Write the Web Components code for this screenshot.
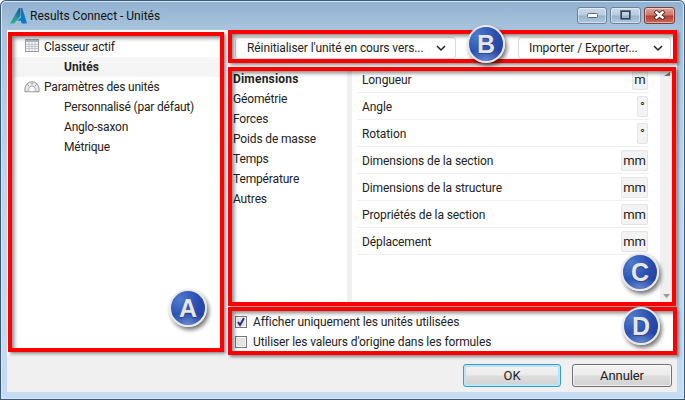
<!DOCTYPE html>
<html lang="fr"><head><meta charset="utf-8"><title>Results Connect - Unités</title>
<style>
html,body{margin:0;padding:0;background:#fff}
body{font:12px/16px Roboto,"Liberation Sans",sans-serif;color:#222;width:685px;height:400px;overflow:hidden;letter-spacing:-.1px}
</style></head><body>
<x-window title-text="Results Connect - Unités">
  <x-pane slot="a" style="height:320px;margin-top:2px">
    <x-tree-item icon="table">Classeur actif</x-tree-item>
    <x-tree-item indent selected>Unités</x-tree-item>
    <x-tree-item icon="protractor">Paramètres des unités</x-tree-item>
    <x-tree-item indent>Personnalisé (par défaut)</x-tree-item>
    <x-tree-item indent>Anglo-saxon</x-tree-item>
    <x-tree-item indent>Métrique</x-tree-item>
  </x-pane>
  <x-pane slot="b" variant="toolbar" style="height:33px;margin-bottom:4px">
    <x-combo style="width:221px;padding-right:9px">Réinitialiser l'unité en cours vers...</x-combo>
    <x-combo style="width:153px;padding-left:10px">Importer / Exporter...</x-combo>
  </x-pane>
  <x-pane slot="c" style="height:239px;margin-right:1px;margin-bottom:1px">
    <x-units>
      <x-nav-item slot="nav" selected>Dimensions</x-nav-item>
      <x-nav-item slot="nav">Géométrie</x-nav-item>
      <x-nav-item slot="nav">Forces</x-nav-item>
      <x-nav-item slot="nav">Poids de masse</x-nav-item>
      <x-nav-item slot="nav">Temps</x-nav-item>
      <x-nav-item slot="nav">Température</x-nav-item>
      <x-nav-item slot="nav">Autres</x-nav-item>
      <x-unit-row unit="m" w="16">Longueur</x-unit-row>
      <x-unit-row unit="°" w="11">Angle</x-unit-row>
      <x-unit-row unit="°" w="11">Rotation</x-unit-row>
      <x-unit-row unit="mm" w="27">Dimensions de la section</x-unit-row>
      <x-unit-row unit="mm" w="27">Dimensions de la structure</x-unit-row>
      <x-unit-row unit="mm" w="27">Propriétés de la section</x-unit-row>
      <x-unit-row unit="mm" w="27">Déplacement</x-unit-row>
    </x-units>
  </x-pane>
  <x-pane slot="d" variant="checks" style="height:48px">
    <x-check checked>Afficher uniquement les unités utilisées</x-check>
    <x-check>Utiliser les valeurs d'origine dans les formules</x-check>
  </x-pane>
  <x-btn slot="footer" primary style="width:98px">OK</x-btn>
  <x-btn slot="footer" style="width:100px">Annuler</x-btn>
  <x-badge slot="badges" style="left:169px;top:289px">A</x-badge>
  <x-badge slot="badges" style="left:467px;top:25px">B</x-badge>
  <x-badge slot="badges" style="left:621px;top:253px">C</x-badge>
  <x-badge slot="badges" style="left:622px;top:307px">D</x-badge>
</x-window>
<script>
function def(name, css, html){
  customElements.define(name, class extends HTMLElement{
    connectedCallback(){ if(this.shadowRoot) return; const s=this.attachShadow({mode:'open'});s.innerHTML='<style>'+css+'</style>'+(typeof html==='function'?html(this):html);}
  });
}
const ICONS={
 table:'<svg width="16" height="14" viewBox="0 0 16 14"><rect x="1.5" y=".5" width="13" height="12" fill="#f4f5f7" stroke="#9a9ea5"/><rect x="2" y="1" width="12" height="2" fill="#b5bac2"/><path d="M2 5.500h12M2 7.500h12M2 9.500h12M5 3v9M8 3v9M11 3v9" stroke="#c4c8ce" fill="none"/></svg>',
 protractor:'<svg width="17" height="13" viewBox="0 0 17 13"><path d="M1 12V9a7.500 7.500 0 0 1 15 0v3z" fill="#e9e9e9" stroke="#8f8f8f"/><path d="M5 12V9.500a3.500 3.500 0 0 1 7 0V12z" fill="#fff" stroke="#a5a5a5"/><path d="M8.500 2.500v2M4 4.500l1.200 1.400M13 4.500l-1.200 1.400" stroke="#8f8f8f"/></svg>'
};
def('x-window',`
 :host{display:flex;flex-direction:column;position:relative;width:685px;height:400px;box-sizing:border-box;border-radius:6px 6px 0 0;
   background:linear-gradient(180deg,#8fb0cf 0,#a9c4de 30px,#bcd5ee 160px,#c6dcf2 400px);
   box-shadow:inset 0 0 0 1px #3b5a74, inset 0 0 0 2px #d5e6f5;}
 .title{height:30px;flex:none;display:flex;align-items:center;padding:0 10px 0 10px;gap:3px;box-sizing:border-box}
 .title span{color:#111;flex:1;padding-top:1px;letter-spacing:0}
 .ctl{display:flex;gap:3px;margin-top:0}
 .ctl i{display:flex;align-items:center;justify-content:center;box-sizing:border-box;width:30px;height:17px;border:1px solid #6c8299;border-radius:3px;
   background:linear-gradient(180deg,#cddbe8 0,#b9cce0 48%,#98b2cc 52%,#b2c9de 100%);box-shadow:inset 0 0 0 1px rgba(255,255,255,.45)}
 .ctl i.close{width:31px;border-color:#7a3d3a;background:linear-gradient(180deg,#e0a59c 0,#cf7468 48%,#b23d30 52%,#c96b5e 100%)}
 .client{flex:1;margin:0 8px 8px 7px;background:#f0f0f0;display:flex;flex-direction:column;min-height:0}
 .main{height:325px;flex:none;display:grid;grid-template-columns:216px 1fr;column-gap:4px;padding:0 0 0 1px;background:#fff}
 .right{display:flex;flex-direction:column;min-width:0}
 .foot{display:flex;justify-content:flex-end;gap:11px;padding:9px 5px 0 0}
`,(h)=>`
 <div class="title">
  <svg width="17" height="17" viewBox="0 0 17 17"><defs><linearGradient id="g" x1="0" y1="1" x2=".6" y2="0"><stop offset="0" stop-color="#3cb46e"/><stop offset=".5" stop-color="#1f9aa0"/><stop offset="1" stop-color="#1a5f8e"/></linearGradient></defs>
   <path d="M0 16.500 9 1h1.500v8L4 16.500z" fill="url(#g)"/><path d="M11 1h1.300L17 16.500h-5.300l-.7-2.700H7l4-3.300z" fill="#0a7cc4"/></svg>
  <span>${h.getAttribute('title-text')}</span>
  <div class="ctl">
   <i><svg width="11" height="6"><rect x=".5" y="1.500" width="10" height="4" rx="1" fill="#fff" stroke="#54677c"/></svg></i>
   <i style="width:31px"><svg width="11" height="10"><rect x="1" y="1" width="9" height="8" fill="none" stroke="#2e4358" stroke-width="2"/><rect x="0" y="0" width="11" height="10" fill="none" stroke="#fff" stroke-opacity=".5"/></svg></i>
   <i class="close"><svg width="13" height="10"><path d="M2 1l9 8M11 1L2 9" stroke="#3a1714" stroke-width="4"/><path d="M2.500 1.500l8 7M10.500 1.500l-8 7" stroke="#fff" stroke-width="2.400"/></svg></i>
  </div>
 </div>
 <div class="client">
  <div class="main"><div><slot name="a"></slot></div><div class="right"><slot name="b"></slot><slot name="c"></slot><slot name="d"></slot></div></div>
  <div class="foot"><slot name="footer"></slot></div>
 </div>
 <slot name="badges"></slot>`);
def('x-pane',`
 :host{display:block;box-sizing:border-box;border:4px solid #f00;background:#fff;position:relative;box-shadow:2px 2px 3px rgba(0,0,0,.45)}
 .in{position:absolute;inset:0;overflow:hidden}
 .sh{position:absolute;inset:0;box-shadow:inset 3px 3px 4px -1px rgba(0,0,0,.5);pointer-events:none;z-index:2}
 .c{height:100%;box-sizing:border-box}
 :host([variant=toolbar]) .c{display:flex;justify-content:space-between;padding:3px 2px 0 3px}
 :host([variant=checks]) .c{padding:1px 0 0 3px}
 :host(:not([variant])) .c{padding:1px 0 0 1px}
 :host([slot=c]) .c{padding:0}
`,`<div class="in"><div class="c"><slot></slot></div><div class="sh"></div></div>`);
def('x-tree-item',`
 :host{display:flex;align-items:center;height:20px;padding-left:11px;gap:4px;box-sizing:border-box;letter-spacing:-.2px}
 :host([indent]){padding-left:51px}
 :host([selected]){background:#f5f5f5;font-weight:700;letter-spacing:.1px}
 .ic{width:16px;height:14px;display:flex;align-items:center;margin-top:-2px}
`,(h)=>(h.getAttribute('icon')?`<span class="ic">${ICONS[h.getAttribute('icon')]}</span>`:'')+'<slot></slot>');
def('x-combo',`
 :host{display:flex;align-items:center;box-sizing:border-box;height:22px;border:1px solid #d9d9d9;border-radius:3px;background:#fff;padding:0 7px 0 11px;justify-content:space-between;white-space:nowrap}
`,`<slot></slot><svg width="10" height="7" viewBox="0 0 10 7"><path d="M1 1l4 4 4-4" fill="none" stroke="#222" stroke-width="1.500"/></svg>`);
def('x-units',`
 :host{display:flex;height:100%}
 nav{width:115px;flex:none;margin-top:-2px;padding-left:1px;box-sizing:border-box}
 .sep{width:5px;flex:none;background:#f0f0f0;height:231px}
 main{flex:1;margin-top:-5px;padding-left:5px;padding-right:11px;min-width:0}
 .bar{width:12px;flex:none;background:#f0f0f0;display:flex;flex-direction:column;justify-content:space-between;align-items:flex-end;padding:1px 2px 4px 0;box-sizing:border-box;height:231px}
 .wrap{flex:1;display:flex;overflow:hidden;height:231px;min-width:0}
`,`<nav><slot name="nav"></slot></nav><div class="sep"></div><div class="wrap"><main><slot></slot></main></div>
 <div class="bar"><svg width="6" height="4"><path d="M0 4h6V0z" fill="#777"/></svg><svg width="7" height="4"><path d="M0 0h7L3.500 4z" fill="#999"/></svg></div>`);
def('x-nav-item',`
 :host{display:flex;align-items:center;height:20px;letter-spacing:-.15px}
 :host([selected]){font-weight:700;letter-spacing:.2px}
`,'<slot></slot>');
def('x-unit-row',`
 :host{display:flex;align-items:center;height:27px;box-sizing:border-box;border-bottom:1px solid #efefef;padding:1px 1px 0 5px;justify-content:space-between}
 b{font-weight:400;display:flex;justify-content:center;align-items:center;box-sizing:border-box;height:21px;background:#f3f3f3;border:1px solid #e4e4e4;border-radius:2px;font-size:13px}
`,(h)=>`<slot></slot><b style="width:${h.getAttribute('w')}px">${h.getAttribute('unit')}</b>`);
def('x-check',`
 :host{display:flex;align-items:center;height:20px;gap:6px;white-space:nowrap}
 i{width:12px;height:12px;box-sizing:border-box;border:1px solid #777;background:#e4e4e4;box-shadow:inset 0 0 0 1px #f8f8f8;display:flex;align-items:center;justify-content:center}
`,(h)=>`<i>${h.hasAttribute('checked')?'<svg width="10" height="10" viewBox="0 0 10 10"><path d="M2 5l2 3 4-7" fill="none" stroke="#2c2a8c" stroke-width="2"/></svg>':''}</i><slot></slot>`);
def('x-btn',`
 :host{display:flex;align-items:center;justify-content:center;box-sizing:border-box;height:23px;border:1px solid #707070;border-radius:3px;
  background:linear-gradient(180deg,#f3f3f3 0,#ebebeb 48%,#dcdcdc 52%,#d2d2d2 100%);box-shadow:inset 0 0 0 1px rgba(255,255,255,.7);font-size:13px}
 :host([primary]){border-color:#3c9bc9;box-shadow:inset 0 0 0 2px #b9e6f7}
`,'<slot></slot>');
def('x-badge',`
 :host{position:absolute;width:38px;height:38px;box-sizing:border-box;border-radius:50%;border:2px solid #e8e8e8;z-index:5;display:flex;align-items:center;justify-content:center;
  background:radial-gradient(ellipse 60% 30% at 50% 95%,rgba(150,180,235,.55) 0,rgba(150,180,235,0) 100%),radial-gradient(circle at 25% 25%,#4f7bcc 0,#2a4fb0 50%,#1b3a9a 100%);box-shadow:2px 3px 4px rgba(0,0,0,.55);
  color:#e6e6e6;font:700 25px/1 "Liberation Sans",sans-serif;letter-spacing:0;text-shadow:0 1px 1px rgba(0,0,0,.3)}
`,'<slot></slot>');
</script>
</body></html>
